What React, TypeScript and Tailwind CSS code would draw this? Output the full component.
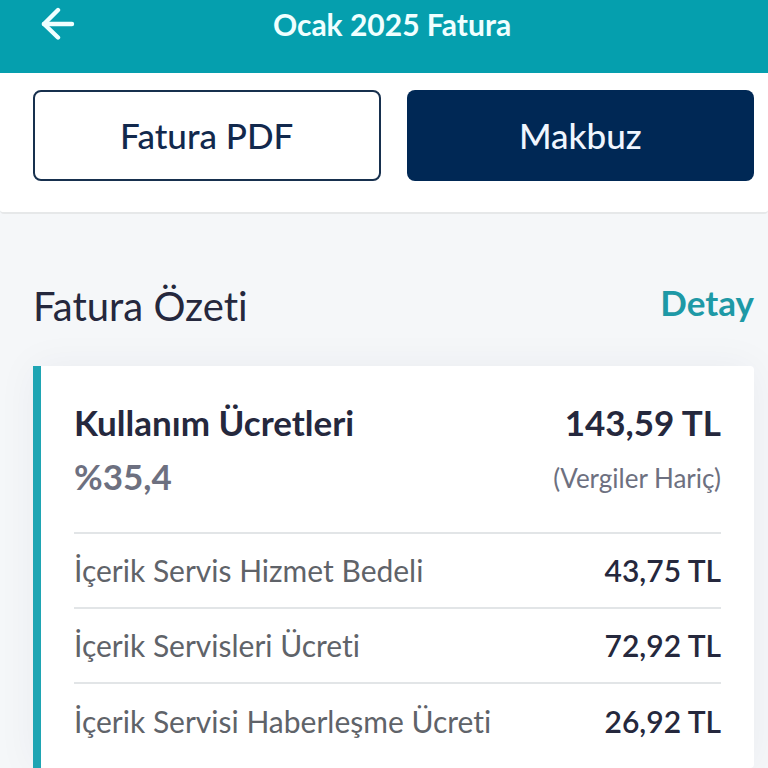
import React from 'react';

const items = [
  { label: 'İçerik Servis Hizmet Bedeli', amount: '43,75 TL' },
  { label: 'İçerik Servisleri Ücreti', amount: '72,92 TL' },
  { label: 'İçerik Servisi Haberleşme Ücreti', amount: '26,92 TL' },
];

function BackIcon() {
  return (
    <svg width="36" height="34" viewBox="0 0 36 34" fill="none" stroke="currentColor" strokeWidth="4.4" strokeLinecap="round" strokeLinejoin="round" aria-hidden="true">
      <path d="M18 3 L4 17 L18 30.5" />
      <path d="M4 17 H32" />
    </svg>
  );
}

export default function App() {
  return (
    <div className="min-h-screen flex flex-col overflow-x-hidden bg-[#f5f7f9] font-['Lato',sans-serif] text-[#25283d] [font-variant-ligatures:none]">
      {/* Header */}
      <header className="h-[73px] shrink-0 bg-[#059fae] text-[#f0ffff] grid grid-cols-[1fr_auto_1fr] items-start pl-10 pr-6 pt-[7px]">
        <button type="button" aria-label="Geri" className="justify-self-start">
          <BackIcon />
        </button>
        <h1 className="text-[30px] leading-[34px] font-bold">Ocak 2025 Fatura</h1>
      </header>

      {/* Actions */}
      <div className="grid grid-cols-2 gap-[26px] pl-[33px] pr-[14px] pt-[17px] pb-[31px] bg-white rounded-b-sm border-b-2 border-[#e6e8e9]">
        <button type="button" className="h-[91px] rounded-lg border-2 border-[#17304e] bg-white text-[35px] font-medium text-[#12294d]">
          Fatura PDF
        </button>
        <button type="button" className="h-[91px] rounded-lg bg-[#002855] text-[35px] font-medium text-[#f0f6ff]">
          Makbuz
        </button>
      </div>

      <main className="flex-1 flex flex-col pl-[33px] pr-[14px] pt-16">
        <div className="flex items-start justify-between mb-8">
          <h2 className="text-[40px] leading-[56px]">Fatura Özeti</h2>
          <a href="#detay" className="text-[35px] leading-[48px] font-bold text-[#1e99a6]">Detay</a>
        </div>

        {/* Summary card */}
        <section className="flex-1 bg-white border-l-8 border-[#1fa5b3] rounded-r-sm px-[33px] pt-[30px] shadow-[0_0_40px_rgba(30,40,80,0.05)]">
          <div className="flex items-center justify-between text-[35px] leading-[52px] font-bold">
            <h3>Kullanım Ücretleri</h3>
            <span>143,59 TL</span>
          </div>
          <div className="flex items-end justify-between leading-[56px] text-[#6d7080] pb-7">
            <span className="text-[35px] font-bold">%35,4</span>
            <span className="text-[26px] leading-[52px]">(Vergiler Hariç)</span>
          </div>
          <table className="w-full text-[30px]">
            <tbody>
              {items.map((item) => (
                <tr key={item.label} className="h-[75px] border-t-2 border-[#e2e5e7]">
                  <th scope="row" className="text-left font-normal text-[#5f6369]">{item.label}</th>
                  <td className="text-right font-semibold">{item.amount}</td>
                </tr>
              ))}
            </tbody>
          </table>
        </section>
      </main>
    </div>
  );
}
